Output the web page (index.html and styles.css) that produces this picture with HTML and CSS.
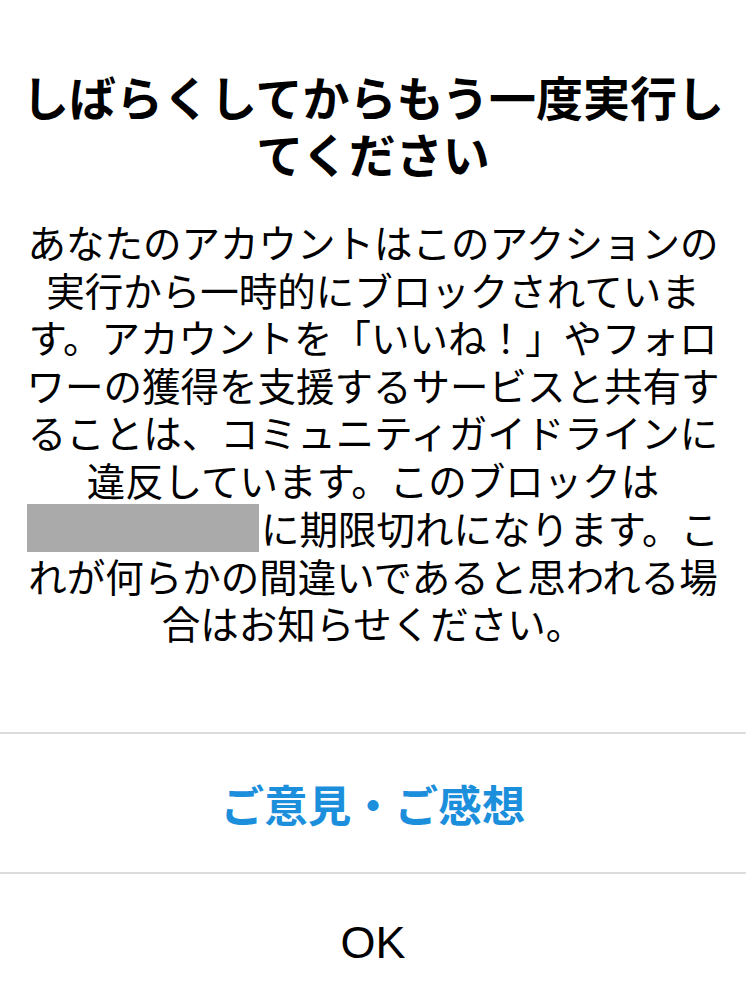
FILE: index.html
```html
<!DOCTYPE html>
<html lang="ja">
<head>
<meta charset="utf-8">
<link rel="stylesheet" href="styles.css">
</head>
<body>
<div class="dialog">
  <div class="content">
    <h1 class="title">しばらくしてからもう一度実行し<br>てください</h1>
    <p class="message">あなたのアカウントはこのアクションの<br>実行から一時的にブロックされていま<br>す。アカウントを「いいね！」やフォロ<br>ワーの獲得を支援するサービスと共有す<br>ることは、コミュニティガイドラインに<br>違反しています。このブロックは<br><span class="redacted"></span>に期限切れになります。こ<br>れが何らかの間違いであると思われる場<br>合はお知らせください。</p>
  </div>
  <div class="actions">
    <div class="action feedback">ご意見・ご感想</div>
    <div class="action ok">OK</div>
  </div>
</div>
</body>
</html>
```

FILE: styles.css
```css
html, body {
  margin: 0;
  padding: 0;
  background: #ffffff;
}
body {
  font-family: "Noto Sans CJK JP", "Noto Sans", sans-serif;
  color: #000;
}
.dialog {
  width: 746px;
  height: 1000px;
  display: flex;
  flex-direction: column;
  overflow: hidden;
}
.content {
  padding-top: 67px;
  height: 732px;
  box-sizing: border-box;
  flex: none;
}
.title {
  margin: 0;
  font-size: 47px;
  line-height: 57px;
  font-weight: 700;
  text-align: center;
  white-space: nowrap;
}
.message {
  margin: 37px 0 0;
  font-size: 38.5px;
  line-height: 47.6px;
  font-weight: 400;
  text-align: center;
  white-space: nowrap;
}
.redacted {
  display: inline-block;
  width: 232px;
  height: 48px;
  background: #aaaaaa;
  vertical-align: top;
  margin-right: 2px;
}
.actions {
  display: flex;
  flex-direction: column;
}
.action {
  border-top: 2px solid #dcdcdc;
  height: 140px;
  box-sizing: border-box;
  display: flex;
  align-items: center;
  justify-content: center;
  flex: none;
}
.feedback {
  color: #1c8fdc;
  font-size: 43.5px;
  font-weight: 700;
}
.ok {
  font-family: "Liberation Sans", Arial, sans-serif;
  font-size: 45px;
  color: #000;
}
```
